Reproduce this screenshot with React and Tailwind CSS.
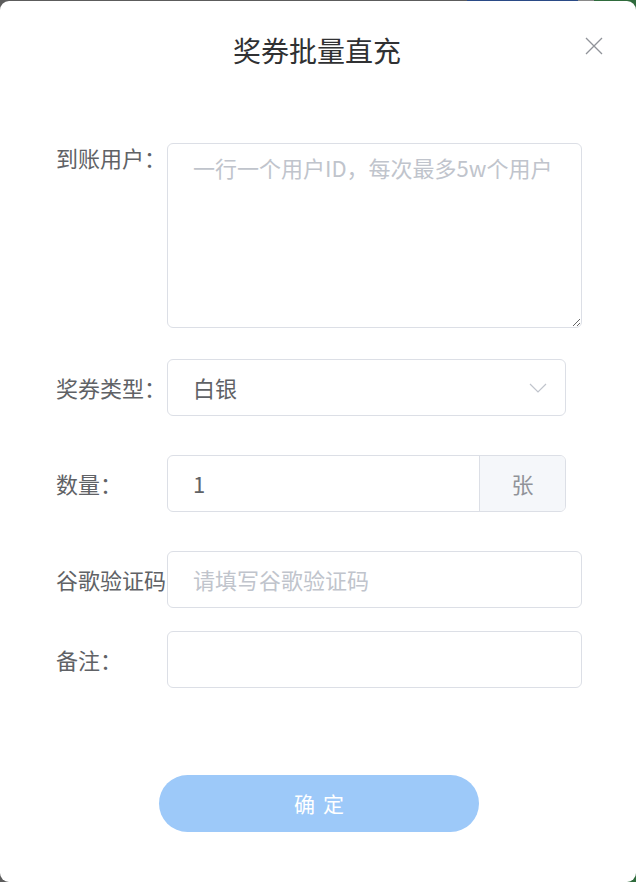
import React from "react";

const font = { fontFamily: '"Noto Sans CJK SC", "Noto Sans", sans-serif' };

export default function App() {
  return (
    <div
      className="w-[636px] h-[882px] overflow-hidden bg-[linear-gradient(90deg,#5c5c5c_0,#5c5c5c_467px,#2a4a86_467px,#2a4a86_578px,#8a8a8a_578px,#8a8a8a_594px,#2f6b3c_594px,#2f6b3c_636px)]"
      style={font}
    >
      <div className="mt-px h-[881px] w-[636px] rounded-[9px] bg-white flex flex-col">
        {/* Header */}
        <div className="relative pt-[29px]">
          <div className="text-center text-[28px] leading-[40px] text-[#303133] pr-[2px]">
            奖券批量直充
          </div>
          <button className="absolute right-[33px] top-[36px] w-[18px] h-[18px] flex items-center justify-center">
            <svg width="18" height="18" viewBox="0 0 18 18" fill="none">
              <path d="M1 1L17 17M17 1L1 17" stroke="#909399" strokeWidth="1.3" />
            </svg>
          </button>
        </div>

        {/* Form */}
        <div className="pl-[56px] pr-[54px] pt-[73px] text-[22px] text-[#606266]">
          {/* 到账用户 */}
          <div className="flex items-start">
            <div className="w-[111px] shrink-0 leading-[28px]">到账用户：</div>
            <textarea
              className="w-[415px] h-[185px] border border-[#dcdfe6] rounded-[6px] pl-[25px] pr-[12px] py-[7px] text-[22px] leading-[33px] text-[#606266] placeholder:text-[#c0c4cc] outline-none resize-y"
              placeholder="一行一个用户ID，每次最多5w个用户"
              style={font}
            />
          </div>

          {/* 奖券类型 */}
          <div className="flex items-center mt-[31px]">
            <div className="w-[111px] shrink-0">奖券类型：</div>
            <div className="w-[399px] h-[57px] border border-[#dcdfe6] rounded-[6px] flex items-center pl-[25px] pr-[18px]">
              <span className="flex-1 text-[#606266]">白银</span>
              <svg width="18" height="10" viewBox="0 0 18 10" fill="none">
                <path d="M1 1L9 9L17 1" stroke="#c0c4cc" strokeWidth="1.2" />
              </svg>
            </div>
          </div>

          {/* 数量 */}
          <div className="flex items-center mt-[39px]">
            <div className="w-[111px] shrink-0">数量：</div>
            <div className="w-[399px] h-[57px] border border-[#dcdfe6] rounded-[6px] flex overflow-hidden">
              <div className="flex-1 flex items-center pl-[25px] text-[#606266]">1</div>
              <div className="w-[86px] border-l border-[#dcdfe6] bg-[#f5f7fa] flex items-center justify-center text-[#909399]">
                张
              </div>
            </div>
          </div>

          {/* 谷歌验证码 */}
          <div className="flex items-center mt-[39px]">
            <div className="w-[111px] shrink-0 whitespace-nowrap">谷歌验证码</div>
            <div className="w-[415px] h-[57px] border border-[#dcdfe6] rounded-[6px] flex items-center pl-[25px] text-[#c0c4cc]">
              请填写谷歌验证码
            </div>
          </div>

          {/* 备注 */}
          <div className="flex items-center mt-[23px]">
            <div className="w-[111px] shrink-0">备注：</div>
            <div className="w-[415px] h-[57px] border border-[#dcdfe6] rounded-[6px]" />
          </div>
        </div>

        {/* Button */}
        <div className="pl-[159px] pt-[87px]">
          <button
            className="w-[320px] h-[57px] rounded-full bg-[#9dc9f9] text-white text-[21px] tracking-[8px] pl-[8px]"
            style={font}
          >
            确定
          </button>
        </div>
      </div>
    </div>
  );
}
